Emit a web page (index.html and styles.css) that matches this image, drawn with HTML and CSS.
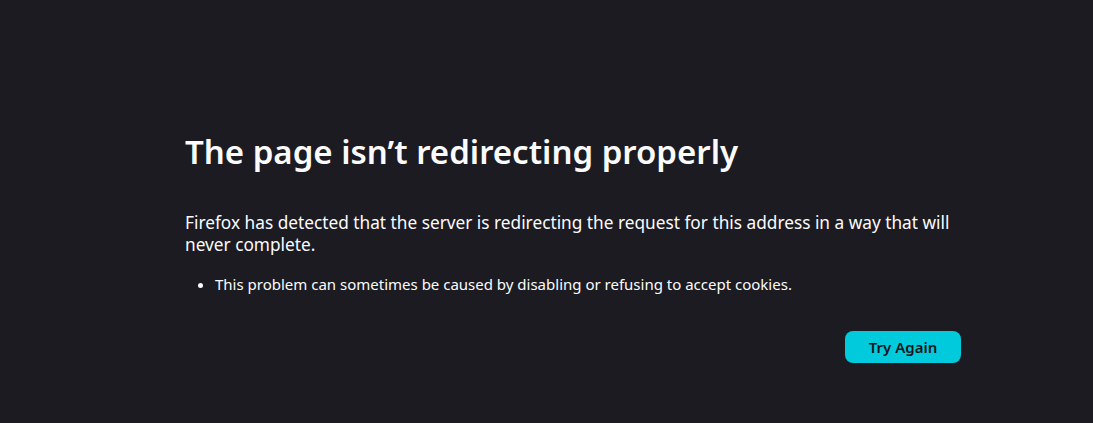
FILE: index.html
```html
<!DOCTYPE html>
<html lang="en">
<head>
<meta charset="utf-8">
<title>Problem loading page</title>
<link rel="stylesheet" href="styles.css">
</head>
<body>
<main class="container">
  <h1 class="title">The page isn’t redirecting properly</h1>
  <p class="desc">Firefox has detected that the server is redirecting the request for this address in a way that will never complete.</p>
  <ul class="list">
    <li>This problem can sometimes be caused by disabling or refusing to accept cookies.</li>
  </ul>
  <div class="actions">
    <button class="primary">Try Again</button>
  </div>
</main>
</body>
</html>
```
FILE: styles.css
```css
html, body {
  margin: 0;
  background: #1c1b22;
  color: #fbfbfe;
  font-family: "Noto Sans", sans-serif;
}
.container {
  width: 776px;
  margin-left: 185px;
  padding-top: 128px;
}
.title {
  margin: 0;
  font-size: 33px;
  font-weight: 600;
  line-height: 48px;
}
.desc {
  margin: 36px 0 0;
  font-size: 17.25px;
  line-height: 22px;
}
.list {
  margin: 18px 0 0;
  padding-left: 30px;
  font-size: 15px;
  line-height: 20px;
}
.actions {
  display: flex;
  justify-content: flex-end;
  margin-top: 37px;
}
.primary {
  width: 116px;
  height: 32px;
  border: 0;
  border-radius: 8px;
  background: #00cadb;
  color: #15141a;
  font-family: "Noto Sans", sans-serif;
  font-size: 15px;
  font-weight: 600;
}
```
